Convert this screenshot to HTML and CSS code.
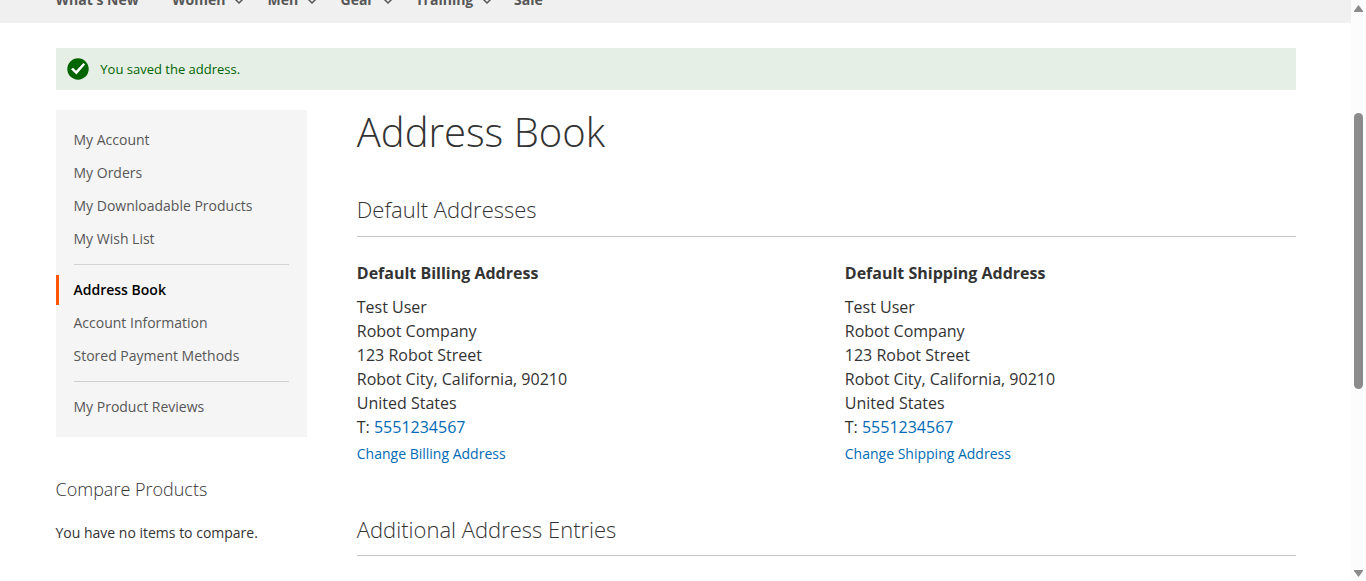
FILE: index.html
```html
<!DOCTYPE html>
<html lang="en">
<head>
<meta charset="utf-8">
<title>Address Book</title>
<link rel="stylesheet" href="styles.css">
</head>
<body>
<div class="viewport">
<div class="page">
<nav class="nav"><ul class="nav-list">
<li class="n1">What's New</li>
<li class="n2">Women <svg class="chev" viewBox="0 0 10 6"><path d="M1 1l4 4 4-4"/></svg></li>
<li class="n3">Men <svg class="chev" viewBox="0 0 10 6"><path d="M1 1l4 4 4-4"/></svg></li>
<li class="n4">Gear <svg class="chev" viewBox="0 0 10 6"><path d="M1 1l4 4 4-4"/></svg></li>
<li class="n5">Training <svg class="chev" viewBox="0 0 10 6"><path d="M1 1l4 4 4-4"/></svg></li>
<li class="n6">Sale</li>
</ul></nav>
<div class="content">
<div class="message"><svg class="check" viewBox="0 0 22 22"><circle cx="11" cy="11" r="10.7" fill="#006400"/><path d="M4 11.3L6 9.8l3.1 2.9 7.3-7.6 1.7 1.3-8.7 10.2z" fill="#fff"/></svg><span>You saved the address.</span></div>
<div class="columns">
<aside class="sidebar">
<ul class="menu">
<li>My Account</li><li>My Orders</li><li>My Downloadable Products</li><li>My Wish List</li>
<li class="divider"></li>
<li class="current">Address Book</li><li>Account Information</li><li>Stored Payment Methods</li>
<li class="divider"></li>
<li>My Product Reviews</li>
</ul>
<h2 class="compare-title">Compare Products</h2>
<p class="compare-text">You have no items to compare.</p>
</aside>
<main class="main">
<h1 class="title">Address Book</h1>
<h2 class="section-title">Default Addresses</h2>
<div class="addresses">
<section class="box"><h3>Default Billing Address</h3>
<address>Test User<br>Robot Company<br>123 Robot Street<br>Robot City, California, 90210<br>United States<br>T: <a>5551234567</a></address>
<a class="action">Change Billing Address</a></section>
<section class="box"><h3>Default Shipping Address</h3>
<address>Test User<br>Robot Company<br>123 Robot Street<br>Robot City, California, 90210<br>United States<br>T: <a>5551234567</a></address>
<a class="action">Change Shipping Address</a></section>
</div>
<h2 class="section-title additional">Additional Address Entries</h2>
</main>
</div>
</div>
</div>
<div class="scrollbar"><svg class="arrow" viewBox="0 0 9 7"><path d="M4.5 0L9 6v1H0V6z"/></svg><div class="thumb"></div><svg class="arrow" viewBox="0 0 9 7"><path d="M4.5 7L0 1V0h9v1z"/></svg></div>
</div>
</body>
</html>
```
FILE: styles.css
```css
* { box-sizing: border-box; }
body { margin: 0; background: #fff; color: #333; font: 14px/20px "Open Sans", sans-serif; overflow: hidden; }
ul, h1, h2, h3, p { margin: 0; padding: 0; list-style: none; }
a { color: #006bb4; }
.viewport { display: flex; height: 581px; overflow: hidden; }
.page { width: 1351px; height: 581px; overflow: hidden; }
.nav { display: flex; align-items: flex-start; height: 23px; background: #f0f0f0; padding-left: 55.5px; }
.nav-list { display: flex; margin-top: -10px; color: #575757; font-weight: 700; }
.nav-list li { height: 20px; display: flex; align-items: center; gap: 9px; }
.n1 { width: 116.5px; }
.n2 { width: 95.5px; }
.n3 { width: 73px; }
.n4 { width: 75px; }
.n5 { width: 98.5px; }
.chev { width: 10px; height: 6px; margin-top: 1px; overflow: visible; fill: none; stroke: #575757; stroke-width: 1.5; }
.content { width: 1240px; margin: 25px 0 0 55.5px; }
.message { height: 42px; background: #e5efe5; color: #006400; font-size: 13px; display: flex; align-items: center; padding-left: 11.5px; gap: 11.3px; }
.check { width: 22px; height: 22px; }
.columns { display: flex; margin-top: 20px; gap: 50.3px; }
.sidebar { flex: 0 0 251px; }
.menu { background: #f5f5f5; height: 327px; padding-top: 15px; color: #575757; }
.menu li { height: 30px; margin-bottom: 3px; padding: 5px 18px; border-left: 0 solid #ff5501; }
.menu .current { border-left-width: 3px; padding-left: 15px; color: #000; font-weight: 600; }
.menu .divider { height: 1px; margin: 10px 18px 10px; padding: 0; background: #d1d1d1; }
.compare-title { margin-top: 42px; font-size: 18px; line-height: 20px; font-weight: 300; }
.compare-text { margin-top: 24px; }
.main { flex: 0 0 939px; min-width: 0; }
.title { font-size: 40px; line-height: 44px; font-weight: 300; }
.section-title { margin-top: 41px; height: 42px; border-bottom: 1px solid #c6c6c6; font-size: 22px; line-height: 28px; font-weight: 300; }
.additional { margin-top: 50px; line-height: 30px; }
.addresses { display: flex; }
.box { flex: 0 0 488px; padding-top: 25px; }
.box + .box { flex-basis: 451px; }
.box h3 { font-size: 16px; line-height: 22px; font-weight: 700; margin-bottom: 11px; }
address { font-style: normal; font-size: 16px; line-height: 24px; }
.action { display: block; margin-top: 5px; }
.scrollbar { width: 15px; background: #fcfcfc; display: flex; flex-direction: column; align-items: center; padding: 5px 0 4px; }
.arrow { width: 9px; height: 7px; fill: #8b8b8b; }
.thumb { width: 9px; height: 276px; margin: 101px 0 auto; border-radius: 5px; background: #8b8b8b; }
```
